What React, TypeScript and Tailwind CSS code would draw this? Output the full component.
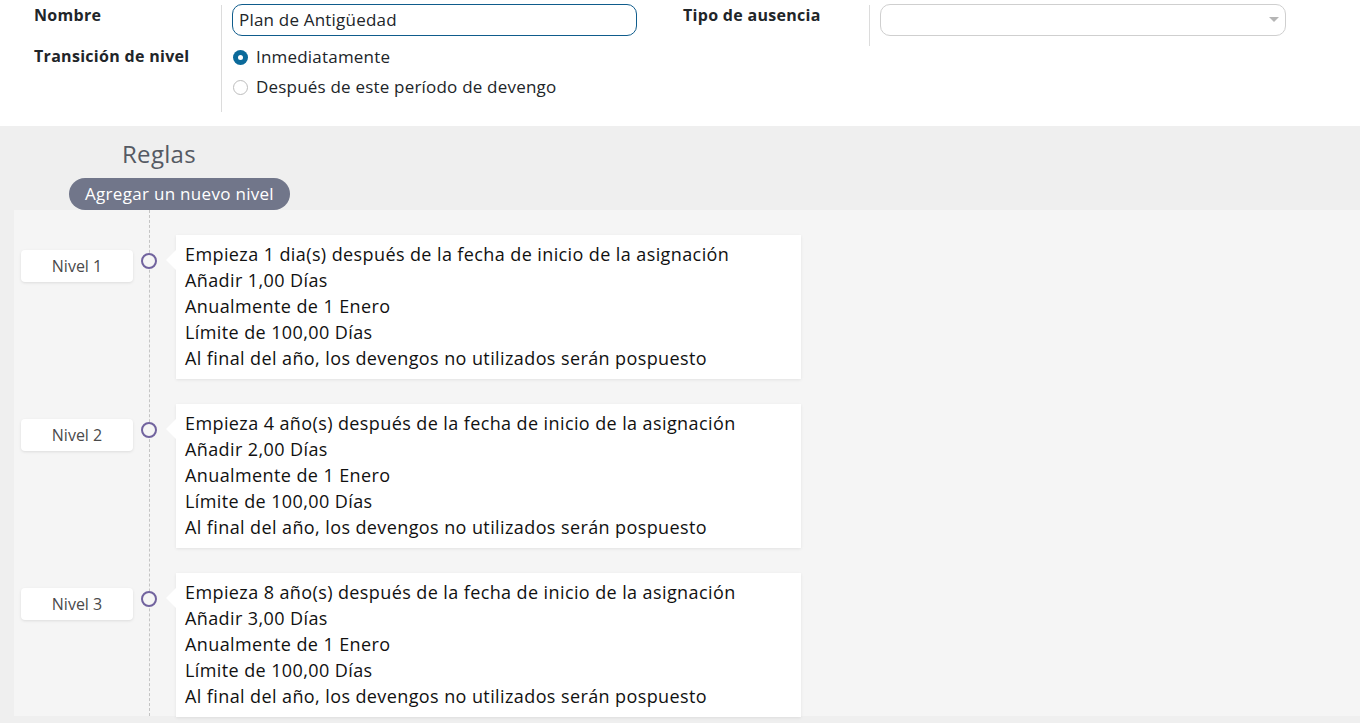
import React from 'react';

const levels = [
  { name: 'Nivel 1', start: 'Empieza 1 dia(s) después de la fecha de inicio de la asignación', add: 'Añadir 1,00 Días' },
  { name: 'Nivel 2', start: 'Empieza 4 año(s) después de la fecha de inicio de la asignación', add: 'Añadir 2,00 Días' },
  { name: 'Nivel 3', start: 'Empieza 8 año(s) después de la fecha de inicio de la asignación', add: 'Añadir 3,00 Días' },
];

function Radio({ checked, label }: { checked?: boolean; label: string }) {
  return (
    <label className="flex items-center gap-[8px] h-[30px]">
      {checked ? (
        <span className="w-[15px] h-[15px] rounded-full bg-[#0b6a9a] flex items-center justify-center">
          <span className="w-[5px] h-[5px] rounded-full bg-white" />
        </span>
      ) : (
        <span className="w-[15px] h-[15px] rounded-full border border-[#bdbdbd] bg-white" />
      )}
      <span className="text-[17px] tracking-[0.2px] text-[#212529]">{label}</span>
    </label>
  );
}

export default function App() {
  return (
    <div className="w-[1360px] h-[723px] overflow-hidden bg-[#efefef] font-['Open_Sans',sans-serif]">
      {/* Header form */}
      <div className="bg-white h-[126px] flex">
        <div className="flex w-[650px]">
          <div className="w-[221px] pl-[34px] pt-[3px] text-[16px] tracking-[0.3px] font-bold text-[#212529]">
            <div className="h-[24px] leading-[24px]">Nombre</div>
            <div className="h-[24px] leading-[24px] mt-[17px]">Transición de nivel</div>
          </div>
          <div className="border-l border-[#dcdcdc] my-[5px] mb-[14px] pl-[10px]">
            <div className="w-[405px] h-[32px] -mt-[1px] border border-[#0f5c8c] rounded-[10px] px-[6px] flex items-center text-[17px] tracking-[0.2px] text-[#212529]">
              Plan de Antigüedad
            </div>
            <div className="pl-[1px] mt-[6px]">
              <Radio checked label="Inmediatamente" />
              <Radio label="Después de este período de devengo" />
            </div>
          </div>
        </div>
        <div className="flex ml-[33px]">
          <div className="w-[186px] pt-[3px] text-[16px] tracking-[0.3px] font-bold text-[#212529]">
            <div className="h-[24px] leading-[24px]">Tipo de ausencia</div>
          </div>
          <div className="border-l border-[#dcdcdc] mt-[5px] h-[41px] pl-[10px]">
            <div className="w-[406px] h-[32px] -mt-[1px] border border-[#cfcfcf] rounded-[10px] flex items-center justify-end pr-[6px]">
              <svg width="10" height="6" viewBox="0 0 10 6"><path d="M0 0h10L5 5z" fill="#b5b5b5" /></svg>
            </div>
          </div>
        </div>
      </div>

      {/* Reglas */}
      <div className="relative">
        <div className="pl-[122px] pt-[14px] h-[52px] text-[24px] tracking-[0.3px] text-[#555a63] leading-[28px]">Reglas</div>
        <div className="pl-[69px]">
          <button className="h-[32px] px-[16px] rounded-full bg-[#71768a] text-white text-[17px] tracking-[0.3px] font-medium">
            Agregar un nuevo nivel
          </button>
        </div>
        <div className="ml-[14px] bg-[#f5f5f5] h-[506px] relative">
          <div className="absolute left-[135px] top-0 bottom-0 border-l border-dashed border-[#c4c4c4]" />
          <div className="pt-[25px] flex flex-col gap-[25px]">
            {levels.map((l) => (
              <div key={l.name} className="flex items-start">
                <div className="w-[112px] h-[32px] ml-[7px] mt-[15px] bg-white rounded-[4px] shadow-[0_1px_3px_rgba(0,0,0,0.1)] flex items-center justify-center text-[16px] text-[#4a4a4a]">
                  {l.name}
                </div>
                <div className="relative ml-[8px] mt-[18px] w-[16px] h-[16px] rounded-full border-2 border-[#71639e] bg-[#f5f5f5]" />
                <div className="relative ml-[19px] w-[625px] h-[144px] bg-white shadow-[0_1px_3px_rgba(0,0,0,0.08)] px-[9px] py-[6px] text-[18px] tracking-[0.4px] leading-[26px] text-[#111]">
                  <div className="absolute -left-[10px] top-[15px] w-0 h-0 border-y-[10px] border-y-transparent border-r-[10px] border-r-white" />
                  <div>{l.start}</div>
                  <div>{l.add}</div>
                  <div>Anualmente de 1 Enero</div>
                  <div>Límite de 100,00 Días</div>
                  <div>Al final del año, los devengos no utilizados serán pospuesto</div>
                </div>
              </div>
            ))}
          </div>
        </div>
      </div>
    </div>
  );
}
